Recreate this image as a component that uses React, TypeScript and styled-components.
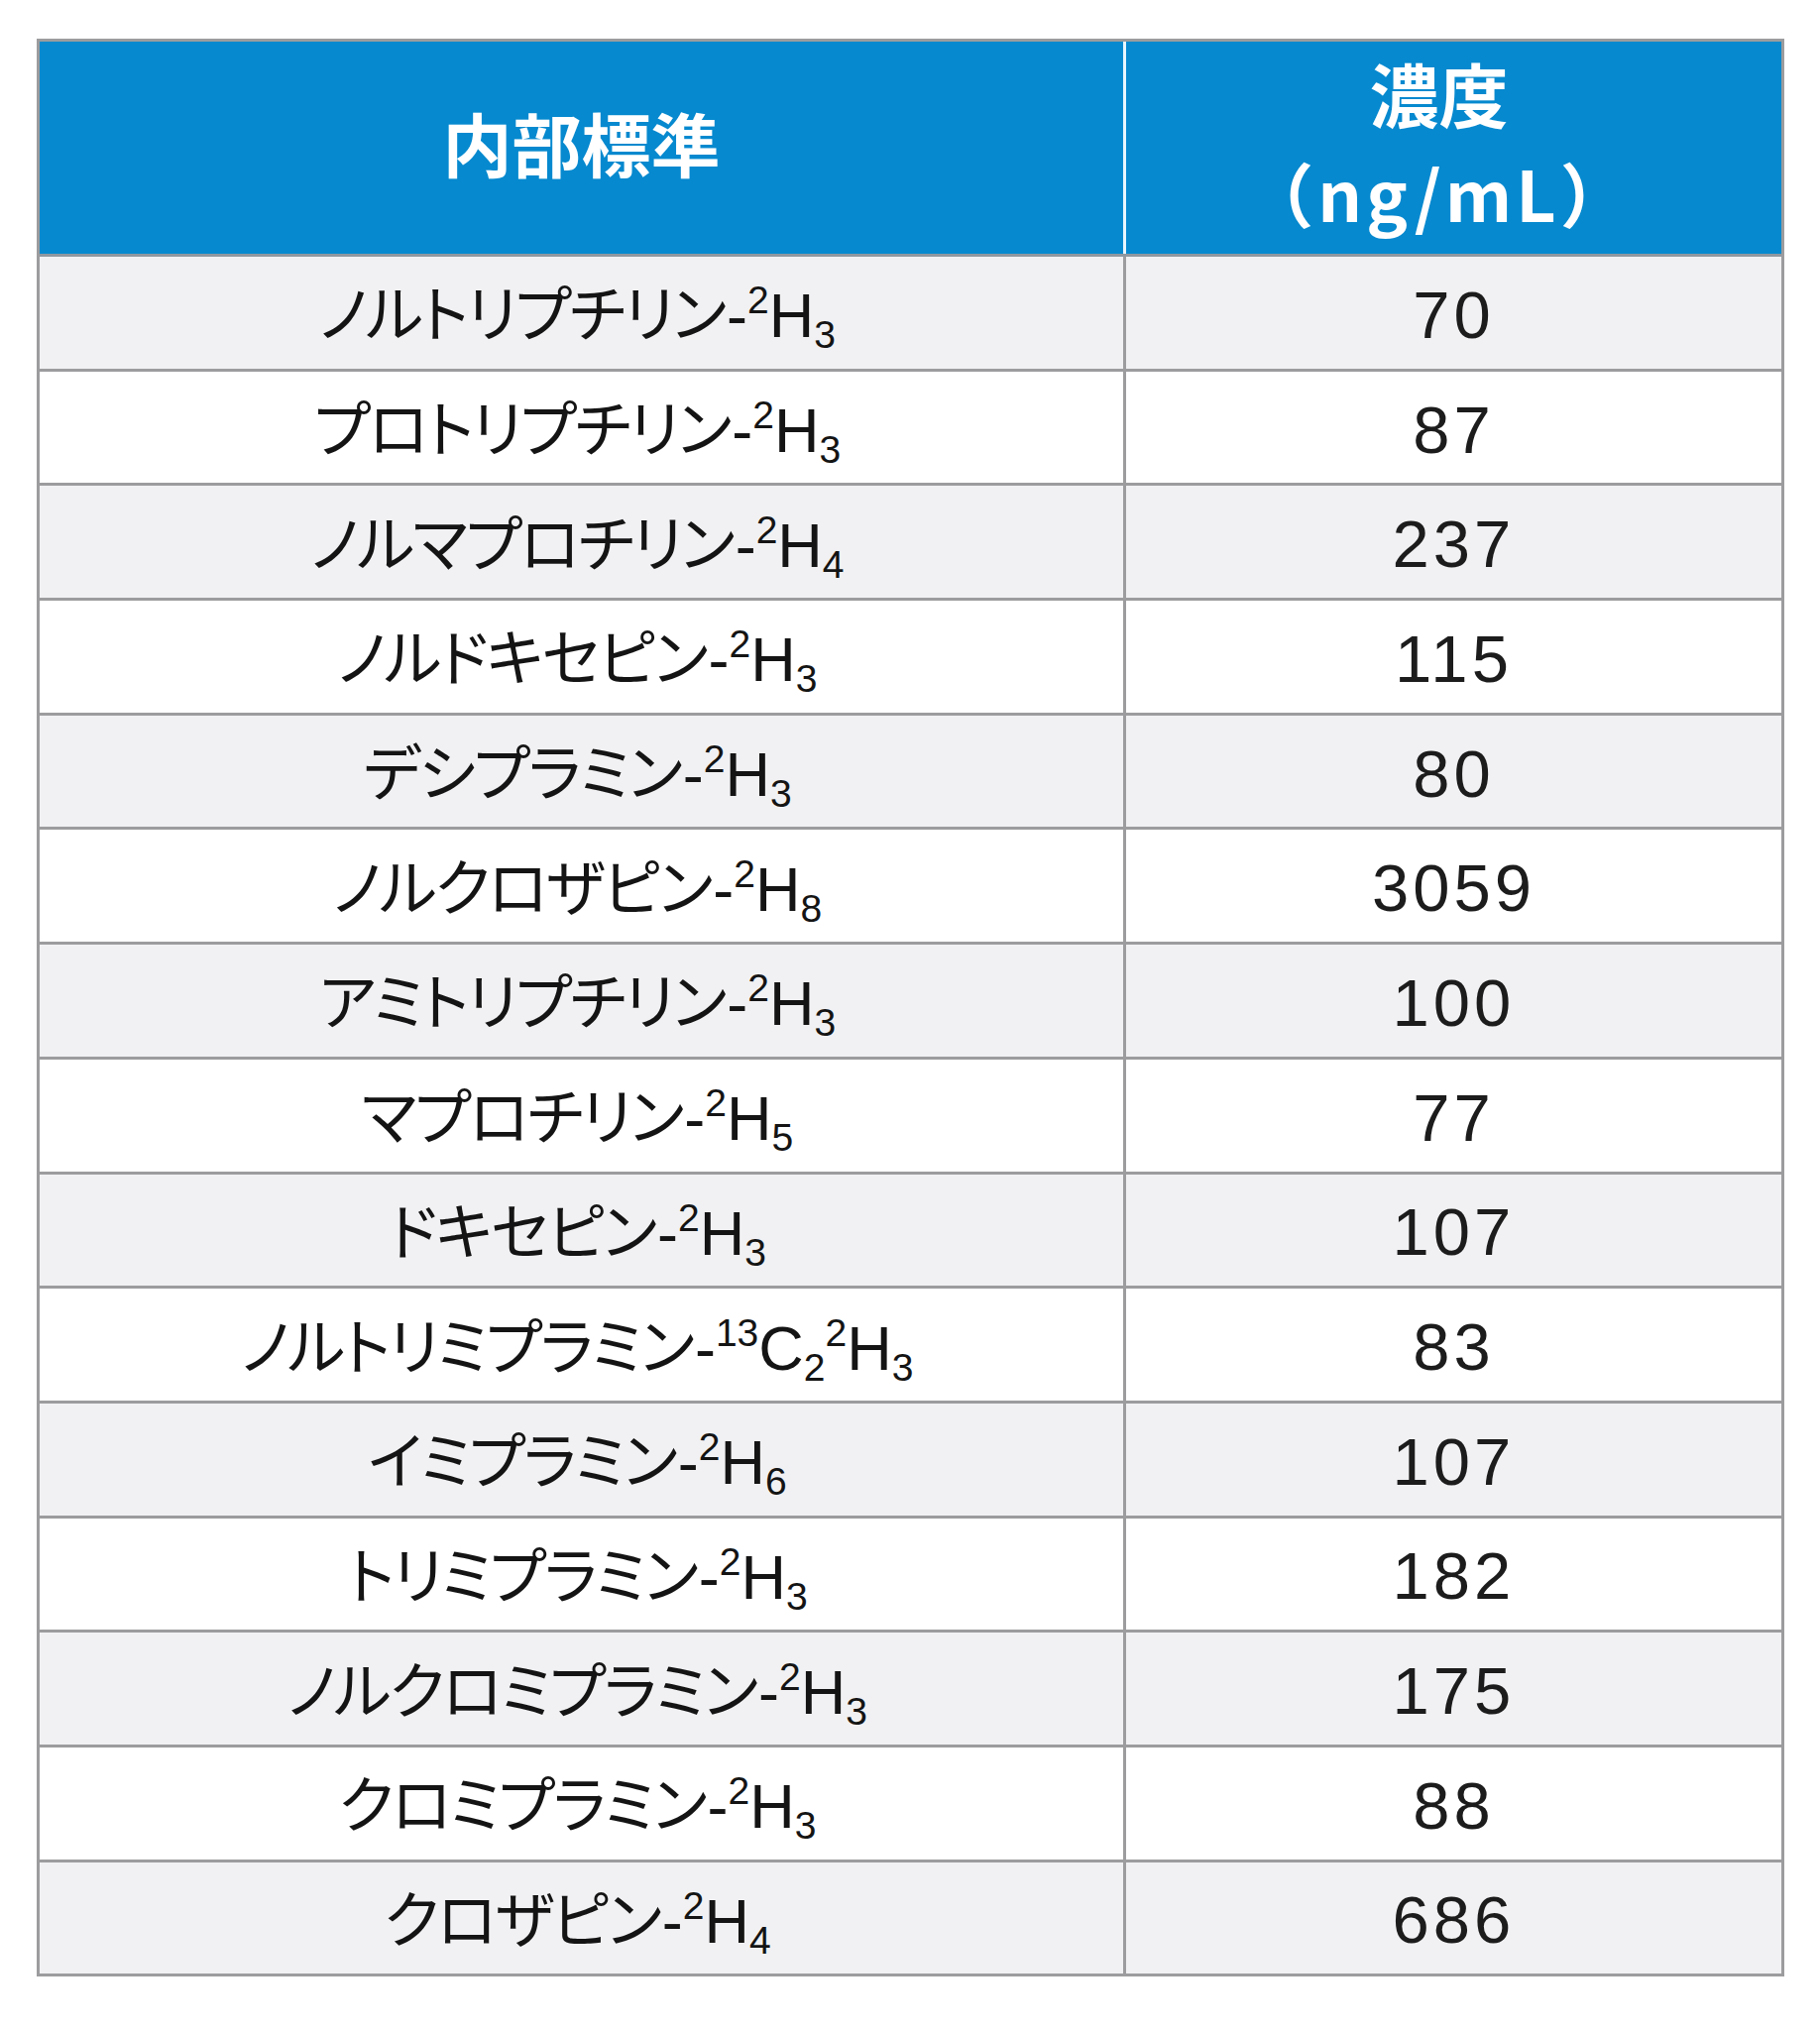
import React from 'react';
import styled, {createGlobalStyle} from 'styled-components';

const GlobalStyle = createGlobalStyle`
    html, body {
        margin: 0;
        padding: 0;
        background: #ffffff;
    }
`;

type Row = {
    label: string;
    value: string;
};

// "^" marks a superscript run, "_" a subscript run, "-" starts the latin part
const rows: Row[] = [
    {label: 'ノルトリプチリン-^2H_3', value: '70'},
    {label: 'プロトリプチリン-^2H_3', value: '87'},
    {label: 'ノルマプロチリン-^2H_4', value: '237'},
    {label: 'ノルドキセピン-^2H_3', value: '115'},
    {label: 'デシプラミン-^2H_3', value: '80'},
    {label: 'ノルクロザピン-^2H_8', value: '3059'},
    {label: 'アミトリプチリン-^2H_3', value: '100'},
    {label: 'マプロチリン-^2H_5', value: '77'},
    {label: 'ドキセピン-^2H_3', value: '107'},
    {label: 'ノルトリミプラミン-^13C_2^2H_3', value: '83'},
    {label: 'イミプラミン-^2H_6', value: '107'},
    {label: 'トリミプラミン-^2H_3', value: '182'},
    {label: 'ノルクロミプラミン-^2H_3', value: '175'},
    {label: 'クロミプラミン-^2H_3', value: '88'},
    {label: 'クロザピン-^2H_4', value: '686'},
];

const renderLabel = (text: string) => {
    const dash = text.indexOf('-');
    const kana = text.slice(0, dash);
    const formula = text.slice(dash);
    const parts = formula
        .split(/(\^\d+|_\d+)/)
        .filter(Boolean)
        .map((part, i) => {
            if (part[0] === '^') return <Sup key={i}>{part.slice(1)}</Sup>;
            if (part[0] === '_') return <Sub key={i}>{part.slice(1)}</Sub>;
            return <React.Fragment key={i}>{part}</React.Fragment>;
        });
    return (
        <Label>
            <Kana>{kana}</Kana>
            <Formula>{parts}</Formula>
        </Label>
    );
};

const App = () => {
    return (
        <Page>
            <GlobalStyle />
            <Table>
                <HeaderRow>
                    <HeaderCell>内部標準</HeaderCell>
                    <HeaderCell $divider>
                        <span>濃度</span>
                        <Unit>（ng/mL）</Unit>
                    </HeaderCell>
                </HeaderRow>
                {rows.map((row, i) => (
                    <BodyRow key={i} $shaded={i % 2 === 0} $last={i === rows.length - 1}>
                        <NameCell>{renderLabel(row.label)}</NameCell>
                        <ValueCell>{row.value}</ValueCell>
                    </BodyRow>
                ))}
            </Table>
        </Page>
    );
};

const Page = styled.div`
    padding: 39px 36px 40px 37px;
    width: 1763px;
`;

const Table = styled.div`
    width: 1763px;
    box-sizing: border-box;
    border: 3px solid #9c9c9e;
    display: flex;
    flex-direction: column;
`;

const HeaderRow = styled.div`
    display: grid;
    grid-template-columns: 1093px 1fr;
    height: 214px;
    background-color: #0689cf;
    border-bottom: 3px solid #8f98a0;
`;

const HeaderCell = styled.div<{$divider?: boolean}>`
    display: flex;
    flex-direction: column;
    align-items: center;
    justify-content: center;
    color: #ffffff;
    font-family: "Noto Sans CJK JP", sans-serif;
    font-weight: 700;
    font-size: 70px;
    line-height: 100px;
    border-left: ${({$divider}) => ($divider ? '3px solid #e8f6ff' : 'none')};
    padding-right: ${({$divider}) => ($divider ? '30px' : '0')};
    padding-bottom: 10px;
`;

const Unit = styled.span`
    letter-spacing: 4px;
`;

const BodyRow = styled.div<{$shaded: boolean; $last: boolean}>`
    display: grid;
    grid-template-columns: 1093px 1fr;
    height: ${({$last}) => ($last ? '112.7px' : '115.7px')};
    box-sizing: border-box;
    background-color: ${({$shaded}) => ($shaded ? '#f1f1f3' : '#ffffff')};
    border-bottom: ${({$last}) => ($last ? 'none' : '3px solid #9c9c9e')};
`;

const NameCell = styled.div`
    display: flex;
    align-items: center;
    justify-content: center;
    color: #141414;
    white-space: nowrap;
    padding-top: 2px;
    padding-right: 8px;
`;

const Label = styled.span`
    display: inline-block;
    line-height: 1;
`;

const Kana = styled.span`
    font-family: "Noto Sans CJK JP", sans-serif;
    font-feature-settings: "palt";
    font-size: 62px;
    letter-spacing: -2px;
`;

const Formula = styled.span`
    font-family: "Liberation Sans", sans-serif;
    font-size: 63px;
    margin-left: 2px;
`;

const ValueCell = styled.div`
    display: flex;
    align-items: center;
    justify-content: center;
    border-left: 3px solid #9c9c9e;
    font-family: "Liberation Sans", sans-serif;
    font-size: 67px;
    letter-spacing: 4px;
    color: #1c1c1c;
    padding-top: 4px;
`;

const Sup = styled.sup`
    font-size: 0.62em;
    line-height: 0;
    vertical-align: 0.62em;
`;

const Sub = styled.sub`
    font-size: 0.62em;
    line-height: 0;
    vertical-align: -0.28em;
`;

export default App;
